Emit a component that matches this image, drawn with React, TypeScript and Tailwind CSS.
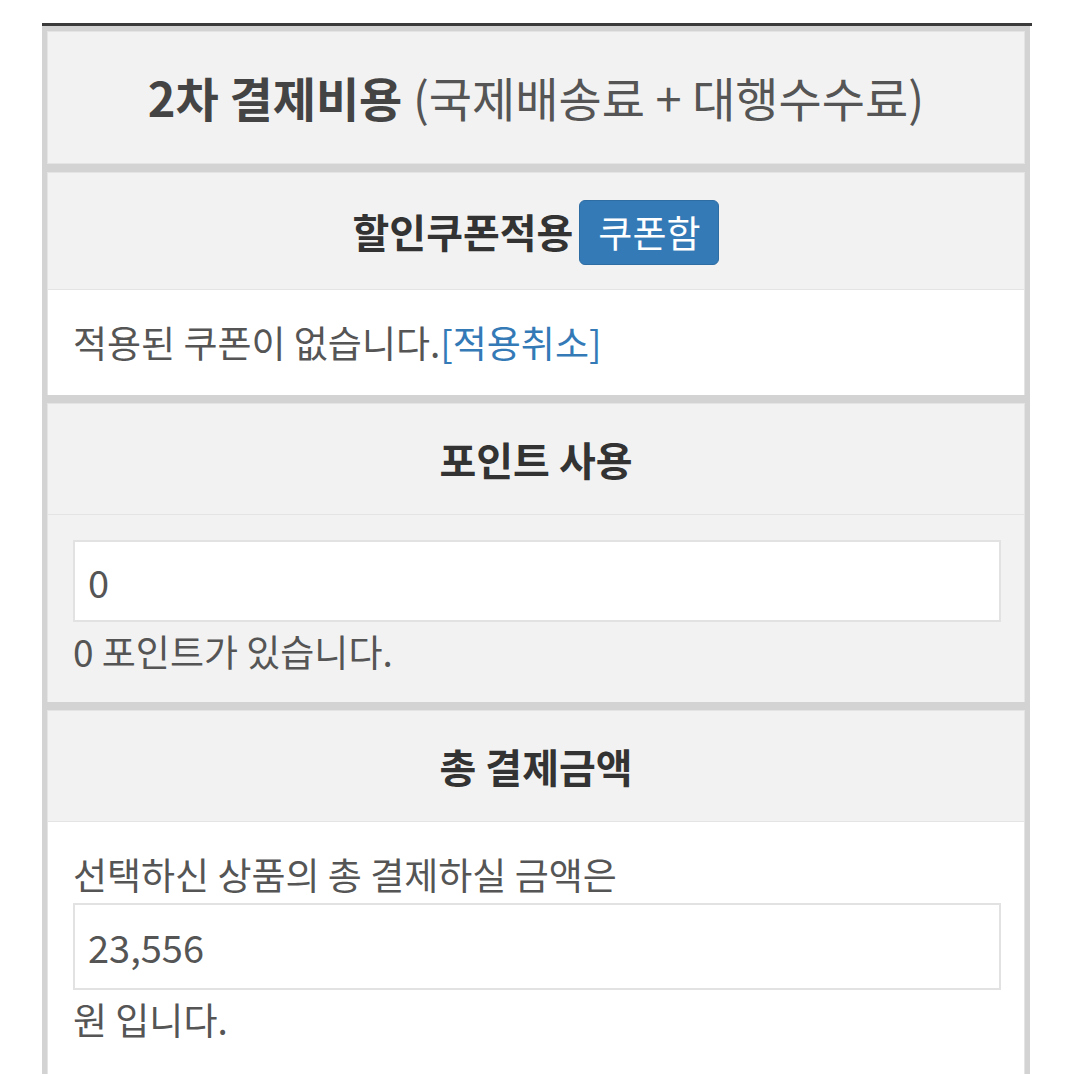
import React from "react";

function PanelHeader({ children, className = "" }: { children: React.ReactNode; className?: string }) {
  return (
    <div
      className={`flex items-center justify-center bg-[#f2f2f2] border border-[#e4e4e4] ${className}`}
    >
      {children}
    </div>
  );
}

function ReadonlyBox({ value, height }: { value: string; height: string }) {
  return (
    <input
      readOnly
      value={value}
      className={`block w-full ${height} border-2 border-[#e2e2e2] bg-white pl-[13px] text-[38px] text-[#555] outline-none`}
    />
  );
}

export default function App() {
  return (
    <div className="min-h-[1074px] bg-white pt-[23px] font-['Noto_Sans_CJK_KR','Noto_Sans',sans-serif] leading-normal">
      <div className="ml-[42px] w-[990px] border-t-[3px] border-[#3a3a3a]">
        <div className="flex w-[988px] flex-col gap-[8px] bg-[#d3d3d3] px-[5px] pt-[5px]">
          {/* 2차 결제비용 */}
          <PanelHeader className="h-[133px]">
            <h2 className="text-[47px] text-[#555]">
              <span className="font-bold text-[#444]">2차 결제비용</span> (국제배송료 + 대행수수료)
            </h2>
          </PanelHeader>

          {/* 할인쿠폰 */}
          <div>
            <PanelHeader className="h-[118px] gap-[6px]">
              <h3 className="text-[40px] font-bold text-[#333]">할인쿠폰적용</h3>
              <button className="mt-[3px] flex h-[65px] items-center rounded-[6px] border border-[#2e6da4] bg-[#337ab7] px-[18px] text-[37px] text-white">
                쿠폰함
              </button>
            </PanelHeader>
            <div className="flex h-[105px] items-center border-x border-[#e4e4e4] bg-white pl-[25px] text-[37px] text-[#555]">
              적용된 쿠폰이 없습니다.<span className="text-[#337ab7]">[적용취소]</span>
            </div>
          </div>

          {/* 포인트 사용 */}
          <div>
            <PanelHeader className="h-[112px]">
              <h3 className="text-[40px] font-bold text-[#333]">포인트 사용</h3>
            </PanelHeader>
            <div className="h-[187px] border-x border-[#e4e4e4] bg-[#f2f2f2] pl-[25px] pr-[23px] pt-[25px]">
              <ReadonlyBox value="0" height="h-[82px]" />
              <p className="mt-[2px] text-[37px] text-[#555]">0 포인트가 있습니다.</p>
            </div>
          </div>

          {/* 총 결제금액 */}
          <div>
            <PanelHeader className="h-[112px]">
              <h3 className="text-[40px] font-bold text-[#333]">총 결제금액</h3>
            </PanelHeader>
            <div className="h-[260px] border-x border-[#e4e4e4] bg-white pl-[25px] pr-[23px] pt-[25px]">
              <p className="text-[37px] text-[#555]">선택하신 상품의 총 결제하실 금액은</p>
              <ReadonlyBox value="23,556" height="h-[87px]" />
              <p className="mt-[2px] text-[37px] text-[#555]">원 입니다.</p>
            </div>
          </div>
        </div>
      </div>
    </div>
  );
}
